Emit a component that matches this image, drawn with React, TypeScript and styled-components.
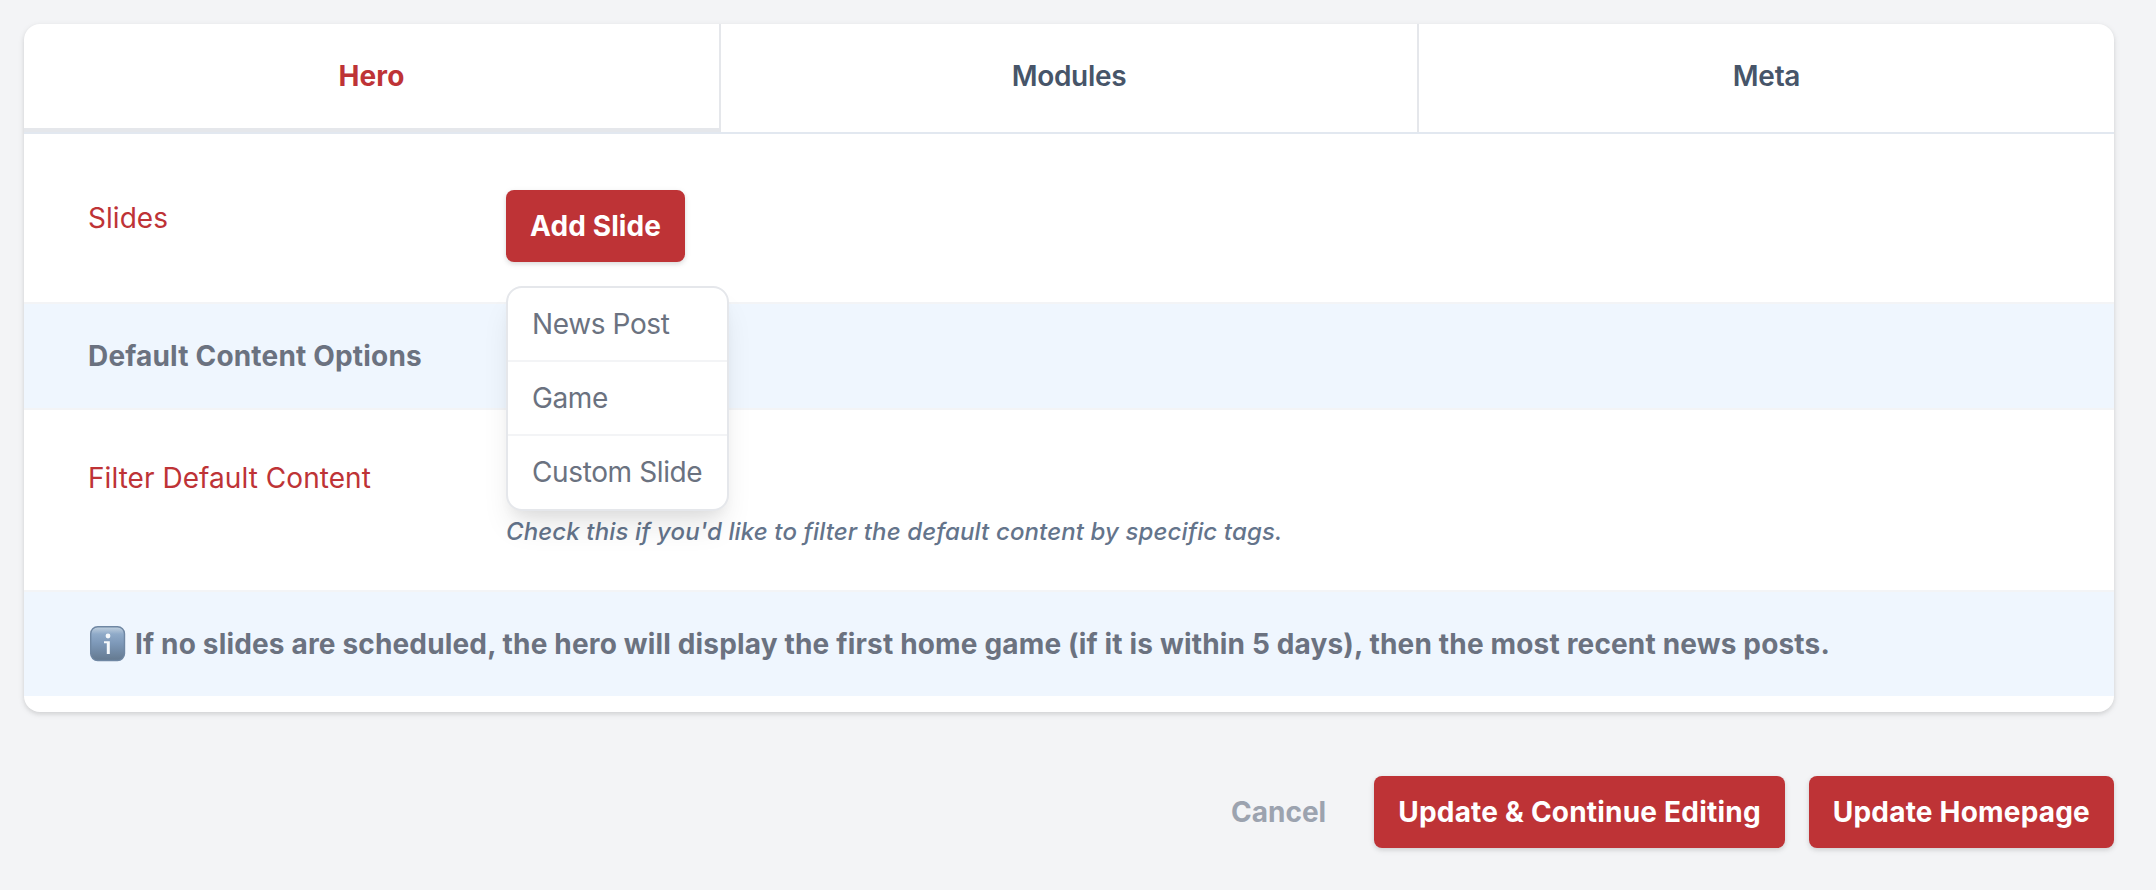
import React, { useState } from 'react';
import styled, { createGlobalStyle } from 'styled-components';

const GlobalStyle = createGlobalStyle`
  *,
  *::before,
  *::after {
    box-sizing: border-box;
  }

  body {
    margin: 0;
    background-color: #f3f4f6;
    color: #6b7280;
    font-family: Inter, 'Liberation Sans', sans-serif;
    font-size: 28px;
    line-height: 40px;
    -webkit-font-smoothing: antialiased;
  }

  button {
    margin: 0;
    border: 0;
    background: none;
    font: inherit;
    cursor: pointer;
  }
`;

const Page = styled.div`
  min-height: 890px;
  padding: 24px 42px 42px 24px;
`;

const Card = styled.div`
  padding-bottom: 16px;
  border-radius: 16px;
  background-color: #ffffff;
  box-shadow: 0 2px 6px rgba(0, 0, 0, 0.1), 0 2px 4px rgba(0, 0, 0, 0.06);
`;

const Tabs = styled.div`
  display: grid;
  grid-template-columns: 697px 698px 1fr;
  height: 110px;
  border-bottom: 2px solid #e2e8f0;
`;

const Tab = styled.button<{ $active: boolean }>`
  display: flex;
  align-items: flex-start;
  justify-content: center;
  padding: 32px 0 0;
  border-right: 2px solid #e5e7eb;
  border-bottom: ${({ $active }) => ($active ? '4px solid #e5e7eb' : '0')};
  color: ${({ $active }) => ($active ? '#be3336' : '#475569')};
  font-weight: ${({ $active }) => ($active ? 700 : 600)};
  letter-spacing: ${({ $active }) => ($active ? 0.1 : -0.3)}px;

  &:last-child {
    border-right: 0;
  }
`;

const Row = styled.div<{ $height: number }>`
  display: flex;
  height: ${({ $height }) => $height}px;
  border-bottom: 2px solid #f3f4f6;
`;

const Label = styled.div<{ $top?: number }>`
  width: 482px;
  padding: ${({ $top = 48 }) => $top}px 64px 0;
  color: #be3336;
  letter-spacing: 0.05px;
  white-space: nowrap;
`;

const Field = styled.div`
  position: relative;
  flex: 1;
  padding-top: 56px;
`;

const Banner = styled.div<{ $divided?: boolean }>`
  display: flex;
  align-items: center;
  height: ${({ $divided }) => ($divided ? 106 : 104)}px;
  padding: 0 64px;
  border-bottom: ${({ $divided }) => ($divided ? '2px solid #f3f4f6' : '0')};
  background-color: #eff6fe;
  font-weight: 700;
  letter-spacing: ${({ $divided }) => ($divided ? 0.18 : 0.163)}px;
  white-space: nowrap;
`;

const InfoIcon = styled.svg`
  width: 36px;
  height: 36px;
  margin: 0 9px 0 2px;
`;

const PrimaryButton = styled.button<{ $spacing?: number }>`
  height: 72px;
  padding: 0 24px;
  border-radius: 8px;
  background-color: #be3336;
  box-shadow: 0 2px 6px rgba(0, 0, 0, 0.1), 0 2px 4px rgba(0, 0, 0, 0.06);
  color: #ffffff;
  font-weight: 700;
  letter-spacing: ${({ $spacing = 0.12 }) => $spacing}px;
  white-space: nowrap;
`;

const Menu = styled.ul`
  position: absolute;
  z-index: 1;
  top: 152px;
  left: 0;
  width: 223px;
  margin: 0;
  padding: 0;
  border: 2px solid #e5e7eb;
  border-radius: 16px;
  background-color: #ffffff;
  box-shadow: 0 20px 30px -6px rgba(0, 0, 0, 0.1), 0 8px 12px -4px rgba(0, 0, 0, 0.05);
  list-style: none;
`;

const MenuItem = styled.li`
  height: 74px;
  padding: 16px 24px;
  border-bottom: 2px solid #f3f4f6;
  letter-spacing: -0.38px;
  white-space: nowrap;
  cursor: pointer;

  &:last-child {
    height: 73px;
    border-bottom-color: transparent;
  }
`;

const HelpText = styled.p`
  margin: 46px 0 0;
  color: #64748b;
  font-size: 24px;
  font-style: italic;
  font-weight: 500;
  line-height: 40px;
  letter-spacing: 0.12px;
`;

const Footer = styled.div`
  display: flex;
  justify-content: flex-end;
  gap: 24px;
  margin-top: 64px;
`;

const CancelButton = styled.button`
  padding: 0 24px;
  color: #9ca3af;
  font-weight: 700;
`;

const tabs = ['Hero', 'Modules', 'Meta'];
const slideTypes = ['News Post', 'Game', 'Custom Slide'];

export default function App() {
  const [activeTab, setActiveTab] = useState('Hero');
  const [menuOpen, setMenuOpen] = useState(true);

  return (
    <Page>
      <GlobalStyle />
      <Card>
        <Tabs>
          {tabs.map((tab) => (
            <Tab key={tab} $active={tab === activeTab} onClick={() => setActiveTab(tab)}>
              {tab}
            </Tab>
          ))}
        </Tabs>

        <Row $height={170}>
          <Label $top={64}>Slides</Label>
          <Field>
            <PrimaryButton onClick={() => setMenuOpen(!menuOpen)}>Add Slide</PrimaryButton>
            {menuOpen && (
              <Menu>
                {slideTypes.map((type) => (
                  <MenuItem key={type} onClick={() => setMenuOpen(false)}>
                    {type}
                  </MenuItem>
                ))}
              </Menu>
            )}
          </Field>
        </Row>

        <Banner $divided>Default Content Options</Banner>

        <Row $height={182}>
          <Label>Filter Default Content</Label>
          <Field>
            <HelpText>Check this if you'd like to filter the default content by specific tags.</HelpText>
          </Field>
        </Row>

        <Banner>
          <InfoIcon viewBox="0 0 36 36" aria-hidden="true">
            <defs>
              <linearGradient id="infoFill" x1="0" y1="0" x2="0" y2="1">
                <stop offset="0" stopColor="#c3d2e0" />
                <stop offset="0.22" stopColor="#8faac8" />
                <stop offset="0.5" stopColor="#7d98b8" />
                <stop offset="1" stopColor="#64798f" />
              </linearGradient>
            </defs>
            <rect x="0.7" y="0.7" width="33.8" height="33.8" rx="7" fill="url(#infoFill)" stroke="#6f87a3" strokeWidth="1.4" />
            <circle cx="18" cy="10" r="2.4" fill="#f6f9fc" />
            <path d="M14 15.2h5.8V28h-3V17.2H14z" fill="#f6f9fc" />
          </InfoIcon>
          If no slides are scheduled, the hero will display the first home game (if it is within 5 days), then the most recent news posts.
        </Banner>
      </Card>

      <Footer>
        <CancelButton>Cancel</CancelButton>
        <PrimaryButton $spacing={0.21}>Update &amp; Continue Editing</PrimaryButton>
        <PrimaryButton $spacing={0.2}>Update Homepage</PrimaryButton>
      </Footer>
    </Page>
  );
}
